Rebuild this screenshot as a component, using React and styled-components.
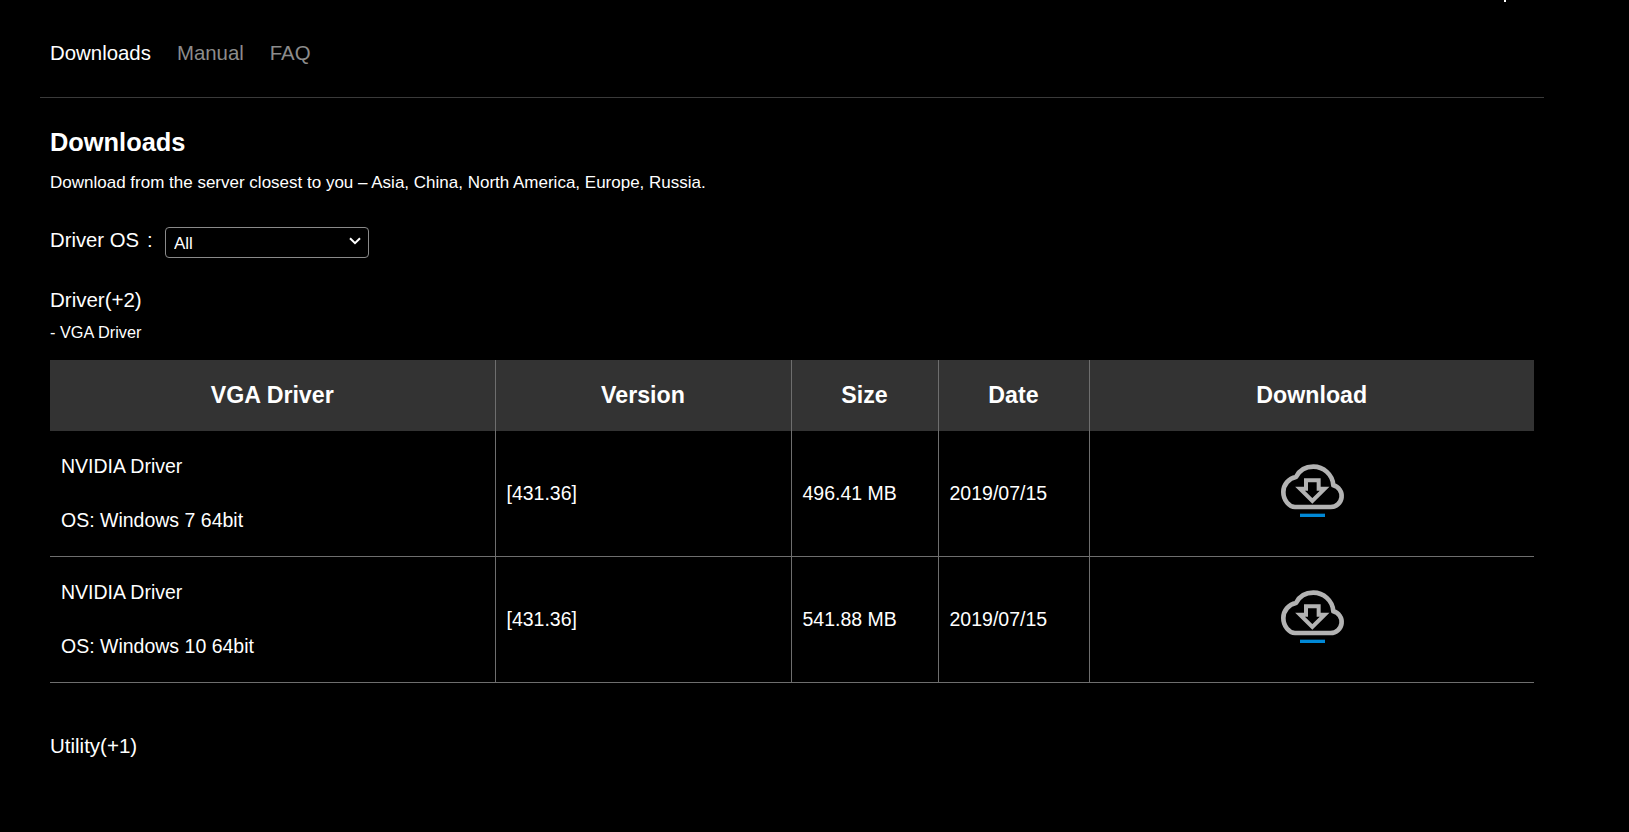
import React from "react";
import styled, { createGlobalStyle } from "styled-components";

const Global = createGlobalStyle`
  html, body { margin: 0; padding: 0; background: #000; }
  body { font-family: "Liberation Sans", Arial, sans-serif; color: #fff; overflow: hidden; }
`;

const Page = styled.div`
  position: relative;
  width: 1504px;
  height: 832px;
  margin-left: 40px;
`;

const TopMark = styled.span`
  position: absolute;
  top: 0;
  left: 1464px;
  width: 2px;
  height: 2px;
  background: #fff;
`;

const Nav = styled.nav`
  display: flex;
  gap: 26px;
  height: 98px;
  box-sizing: border-box;
  padding: 42px 10px 0;
  border-bottom: 1px solid #3a3a3a;
`;

const NavItem = styled.a`
  font-size: 20.4px;
  line-height: 23px;
  color: ${(p) => (p.$active ? "#fff" : "#8c8c8c")};
`;

const Content = styled.main`
  padding: 0 10px;
`;

const Title = styled.h2`
  margin: 30px 0 0;
  font-size: 25.4px;
  line-height: 28px;
  font-weight: 700;
`;

const Lead = styled.p`
  margin: 17px 0 0;
  font-size: 17px;
  line-height: 20px;
`;

const FilterRow = styled.div`
  display: flex;
  align-items: center;
  margin-top: 33px;
  height: 32px;
`;

const FilterLabel = styled.label`
  font-size: 20.3px;
  width: 115px;
  margin-bottom: 4px;
  white-space: pre;
`;

const Colon = styled.span`
  margin-left: 8px;
`;

const SelectBox = styled.div`
  position: relative;
  width: 204px;
  height: 31px;
`;

const OsSelect = styled.select`
  appearance: none;
  display: block;
  width: 100%;
  height: 100%;
  box-sizing: border-box;
  padding: 3px 8px 0;
  background: #000;
  color: #fff;
  border: 1px solid #8a8a8a;
  border-radius: 4px;
  font-family: inherit;
  font-size: 17px;
`;

const Chevron = styled.svg`
  position: absolute;
  top: 10px;
  right: 8px;
  pointer-events: none;
`;

const Category = styled.div`
  font-size: 20.5px;
  line-height: 22px;
  margin-top: ${(p) => p.$top}px;
`;

const SubCategory = styled.div`
  font-size: 16.3px;
  line-height: 18px;
  margin-top: 12px;
`;

const Table = styled.table`
  width: 1484px;
  margin-top: 19px;
  border-collapse: collapse;
  table-layout: fixed;
`;

const HeadCell = styled.th`
  height: 71px;
  padding: 0;
  background: #333;
  font-size: 23.2px;
  font-weight: 700;
  text-align: center;
  border-left: 1px solid #6e6e6e;
  &:first-child { border-left: 0; }
`;

const Row = styled.tr`
  border-bottom: 1px solid #6e6e6e;
`;

const Cell = styled.td`
  height: 125px;
  padding: 0 10px 0 11px;
  font-size: 19.5px;
  border-left: 1px solid #6e6e6e;
  text-align: ${(p) => (p.$center ? "center" : "left")};
  &:first-child { border-left: 0; }
`;

const CellLine = styled.p`
  margin: 0;
  line-height: 27px;
  & + & { margin-top: 27px; }
`;

const IconLink = styled.a`
  display: inline-flex;
  vertical-align: middle;
  margin: -6px 24px 0 0;
`;

const CloudIcon = () => (
  <svg width="120" height="100" viewBox="0 0 360 300" fill="none" aria-hidden="true">
    <path
      d="M165 198H272A33 33 0 0 0 280 133C278 100 250 77 220 77C197 77 178 88 168 108C147 112 130 130 130 153C130 178 148 198 165 198Z"
      stroke="#b3b3b3"
      strokeWidth="14"
      strokeLinejoin="round"
    />
    <path
      d="M198 118H236V143H254L217 180L180 143H198Z"
      stroke="#b3b3b3"
      strokeWidth="12"
      strokeLinejoin="miter"
    />
    <rect x="180" y="218" width="75" height="10" fill="#0088d6" />
  </svg>
);

const rows = [
  { os: "OS: Windows 7 64bit", size: "496.41 MB" },
  { os: "OS: Windows 10 64bit", size: "541.88 MB" },
];

export default function App() {
  return (
    <Page>
      <Global />
      <TopMark />
      <Nav>
        <NavItem $active>Downloads</NavItem>
        <NavItem>Manual</NavItem>
        <NavItem>FAQ</NavItem>
      </Nav>
      <Content>
        <Title>Downloads</Title>
        <Lead>Download from the server closest to you – Asia, China, North America, Europe, Russia.</Lead>
        <FilterRow>
          <FilterLabel>Driver OS<Colon>:</Colon></FilterLabel>
          <SelectBox>
            <OsSelect defaultValue="All">
              <option>All</option>
            </OsSelect>
            <Chevron width="12" height="8" viewBox="0 0 12 8" fill="none" aria-hidden="true">
              <path d="M1 1.2L6 6.2L11 1.2" stroke="#fff" strokeWidth="2" />
            </Chevron>
          </SelectBox>
        </FilterRow>
        <Category $top={31}>Driver(+2)</Category>
        <SubCategory>- VGA Driver</SubCategory>
        <Table>
          <colgroup>
            <col width="445" />
            <col width="296" />
            <col width="147" />
            <col width="151" />
            <col width="445" />
          </colgroup>
          <thead>
            <tr>
              <HeadCell>VGA Driver</HeadCell>
              <HeadCell>Version</HeadCell>
              <HeadCell>Size</HeadCell>
              <HeadCell>Date</HeadCell>
              <HeadCell>Download</HeadCell>
            </tr>
          </thead>
          <tbody>
            {rows.map((r) => (
              <Row key={r.os}>
                <Cell>
                  <CellLine>NVIDIA Driver</CellLine>
                  <CellLine>{r.os}</CellLine>
                </Cell>
                <Cell>[431.36]</Cell>
                <Cell>{r.size}</Cell>
                <Cell>2019/07/15</Cell>
                <Cell $center>
                  <IconLink><CloudIcon /></IconLink>
                </Cell>
              </Row>
            ))}
          </tbody>
        </Table>
        <Category $top={52}>Utility(+1)</Category>
      </Content>
    </Page>
  );
}
